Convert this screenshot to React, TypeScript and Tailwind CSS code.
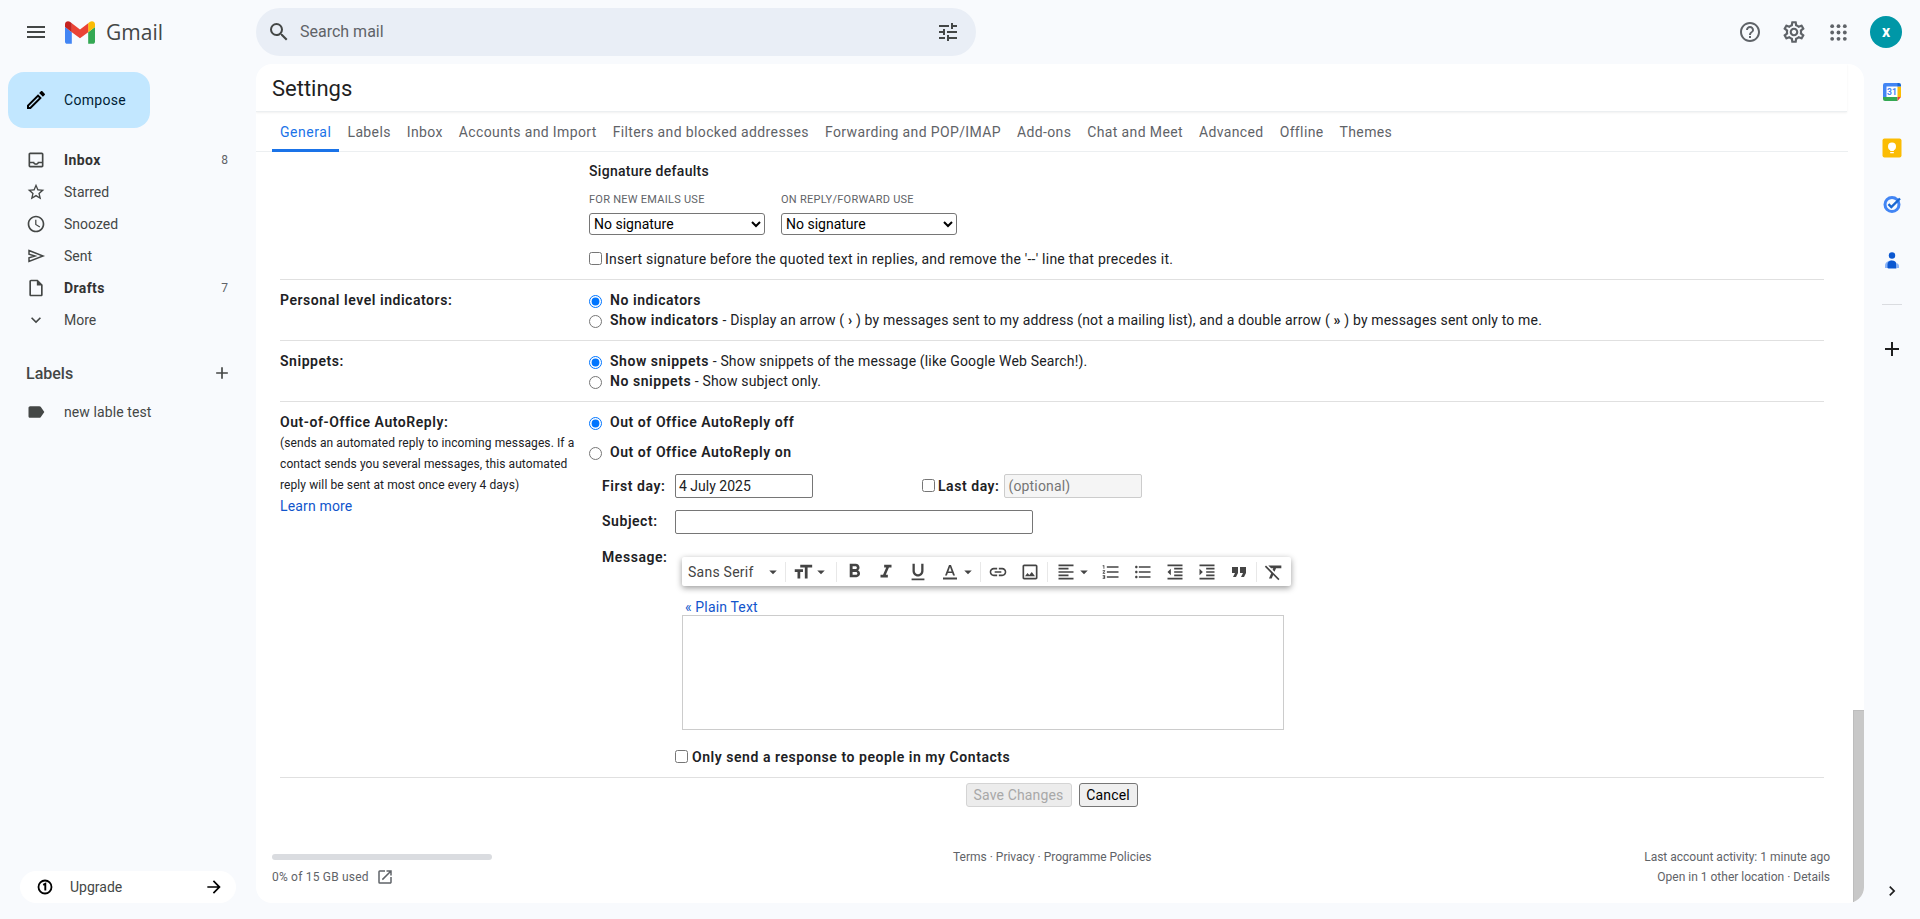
import {
  MdMenu, MdSearch, MdTune, MdHelpOutline, MdOutlineSettings, MdOutlineEdit, MdOutlineInbox, MdStarBorder,
  MdAccessTime, MdOutlineInsertDriveFile, MdExpandMore, MdAdd, MdLabel, MdArrowForward,
  MdOpenInNew, MdChevronRight, MdFormatSize, MdFormatBold, MdFormatItalic, MdFormatUnderlined, MdLink,
  MdOutlineImage, MdFormatAlignLeft, MdFormatListNumbered, MdFormatListBulleted, MdFormatIndentDecrease,
  MdFormatIndentIncrease, MdFormatQuote, MdFormatClear, MdArrowDropDown,
} from 'react-icons/md';

function SentIcon({ size, className }: { size: number; className?: string }) {
  return (
    <svg viewBox="0 0 20 20" width={size} height={size} className={className} fill="none" stroke="currentColor" strokeWidth="1.5" strokeLinejoin="miter">
      <path d="M3 4.500L17 10 3 15.500v-3.700L9 10 3 8.200z" />
    </svg>
  );
}

const navItems = [
  { icon: MdOutlineInbox, label: 'Inbox', count: '8', bold: true },
  { icon: MdStarBorder, label: 'Starred' },
  { icon: MdAccessTime, label: 'Snoozed' },
  { icon: SentIcon, label: 'Sent' },
  { icon: MdOutlineInsertDriveFile, label: 'Drafts', count: '7', bold: true },
  { icon: MdExpandMore, label: 'More' },
];

const tabs = ['General', 'Labels', 'Inbox', 'Accounts and Import', 'Filters and blocked addresses', 'Forwarding and POP/IMAP', 'Add-ons', 'Chat and Meet', 'Advanced', 'Offline', 'Themes'];

const strong = 'font-semibold tracking-[0.55px]';

function GmailLogo() {
  return (
    <svg viewBox="52 42 88 66" className="w-[30px] h-[23px]">
      <path fill="#4285f4" d="M58 108h14V74L52 59v43c0 3.32 2.69 6 6 6" />
      <path fill="#34a853" d="M120 108h14c3.32 0 6-2.69 6-6V59l-20 15" />
      <path fill="#fbbc04" d="M120 48v26l20-15v-8c0-7.42-8.47-11.65-14.4-7.2" />
      <path fill="#ea4335" d="M72 74V48l24 18 24-18v26L96 92" />
      <path fill="#c5221f" d="M52 51v8l20 15V48l-5.6-4.2c-5.94-4.45-14.4-.22-14.4 7.2" />
    </svg>
  );
}

function AppsIcon() {
  return (
    <svg viewBox="0 0 24 24" className="w-[19px] h-[19px]" fill="#5f6368">
      {[4, 12, 20].map((y) => [4, 12, 20].map((x) => <circle key={`${x}-${y}`} cx={x} cy={y} r="2.4" />))}
    </svg>
  );
}

function CalendarIcon() {
  return (
    <svg viewBox="0 0 20 20" className="w-5 h-5">
      <rect x="4" y="4" width="12" height="12" fill="#fff" />
      <path fill="#4285f4" d="M1 3a2 2 0 0 1 2-2h13v3.500H4.500V15H1z" />
      <path fill="#fbbc04" d="M15.500 4.500H19V15h-3.500z" />
      <path fill="#34a853" d="M1 15h14.500v4H3a2 2 0 0 1-2-2z" />
      <path fill="#1967d2" d="M15.500 1H17a2 2 0 0 1 2 2v1.500h-3.500z" />
      <path fill="#ea4335" d="M15.500 15H19l-3.500 4z" />
      <text x="10" y="13.300" textAnchor="middle" fontSize="8.500" fontWeight="700" fill="#4285f4" fontFamily="Roboto, sans-serif">31</text>
    </svg>
  );
}

function KeepIcon() {
  return (
    <svg viewBox="0 0 20 20" className="w-5 h-5">
      <rect x="0.5" y="0.5" width="19" height="19" rx="2" fill="#fbbc04" />
      <circle cx="10" cy="8.5" r="4" fill="#fff" />
      <path fill="#fff" d="M8.2 11h3.6v2H8.2zM8.2 14h3.6v1.3H8.2z" />
    </svg>
  );
}

function TasksIcon() {
  return (
    <svg viewBox="0 0 20 20" className="w-5 h-5">
      <circle cx="10" cy="10.5" r="7" fill="none" stroke="#4285f4" strokeWidth="3" />
      <path d="M6.5 10.2l2.8 2.8L18 4.5" fill="none" stroke="#1967d2" strokeWidth="2.4" />
    </svg>
  );
}

function ContactsIcon() {
  return (
    <svg viewBox="0 0 20 20" className="w-5 h-5">
      <circle cx="10" cy="5.5" r="3.2" fill="#0b57d0" />
      <path fill="#8ab4f8" d="M3 18v-2.5C3 12.5 6 10.500 10 10.500v7.500z" />
      <path fill="#0b57d0" d="M5.500 18v-3.500c0-2.400 2-4 4.500-4s4.500 1.600 4.500 4V18a1 1 0 0 1-1 .5h-7z" />
      <path fill="#8ab4f8" d="M14.500 13c1.500.6 2.500 1.600 2.500 3v2h-2.500z" />
    </svg>
  );
}

function UpgradeIcon() {
  return (
    <svg viewBox="0 0 16 16" className="w-4 h-4" fill="none" stroke="#000">
      <circle cx="8" cy="8" r="6.500" strokeWidth="1.800" />
      <path d="M6.200 5.800L8.300 4.700V11.500" strokeWidth="1.900" />
    </svg>
  );
}

function TextColorIcon() {
  return (
    <svg viewBox="0 0 20 20" className="w-5 h-5" fill="#444">
      <path d="M9 3h2l4 10.500h-1.900l-.9-2.500H7.800l-.9 2.500H5zm-.6 6.500h3.200L10 5z" />
      <rect x="3" y="15.500" width="14" height="2" />
    </svg>
  );
}

function ToolButton({ children }: { children: React.ReactNode }) {
  return <div className="w-8 h-full flex items-center justify-center text-[#444]">{children}</div>;
}

function ToolSep() {
  return <div className="w-px h-5 bg-[#e8e8e8] mx-[1px]" />;
}

function Toolbar() {
  return (
    <div className="w-[609px] h-[29px] flex items-center bg-white rounded-[2px] shadow-[0_2px_6px_rgba(0,0,0,0.4)]">
      <div className="w-[102px] pl-[6px] flex items-center text-[14px] tracking-[0.25px] text-[#444]">
        <span>Sans Serif</span>
        <MdArrowDropDown size={18} className="ml-[10px]" />
      </div>
      <ToolSep />
      <div className="w-[48px] flex items-center justify-center text-[#444]">
        <MdFormatSize size={22} />
        <MdArrowDropDown size={18} className="-ml-[2px]" />
      </div>
      <ToolSep />
      <ToolButton><MdFormatBold size={23} /></ToolButton>
      <ToolButton><MdFormatItalic size={22} /></ToolButton>
      <ToolButton><MdFormatUnderlined size={22} /></ToolButton>
      <div className="w-[45px] flex items-center pl-[6px] text-[#444]">
        <TextColorIcon />
        <MdArrowDropDown size={18} className="-ml-[1px]" />
      </div>
      <ToolSep />
      <ToolButton><MdLink size={20} /></ToolButton>
      <ToolButton><MdOutlineImage size={20} /></ToolButton>
      <ToolSep />
      <div className="w-[46px] flex items-center pl-[7px] text-[#444]">
        <MdFormatAlignLeft size={20} />
        <MdArrowDropDown size={18} className="-ml-[1px]" />
      </div>
      <ToolButton><MdFormatListNumbered size={20} /></ToolButton>
      <ToolButton><MdFormatListBulleted size={20} /></ToolButton>
      <ToolButton><MdFormatIndentDecrease size={20} /></ToolButton>
      <ToolButton><MdFormatIndentIncrease size={20} /></ToolButton>
      <ToolButton><MdFormatQuote size={24} /></ToolButton>
      <ToolSep />
      <ToolButton><MdFormatClear size={22} /></ToolButton>
    </div>
  );
}

function Sidebar() {
  return (
    <aside className="w-64 shrink-0 flex flex-col pt-2">
      <button className="ml-2 w-[142px] h-14 rounded-2xl bg-[#c2e7ff] flex items-center text-[#001d35]">
        <MdOutlineEdit size={24} className="ml-[16px] text-black" />
        <span className="ml-[16px] text-sm tracking-[0.3px]">Compose</span>
      </button>
      <nav className="mt-4">
        {navItems.map((item) => {
          const Icon = item.icon;
          return (
            <div key={item.label} className="h-8 flex items-center pl-[26px] pr-7 text-sm text-[#444746]">
              <Icon size={20} className="shrink-0" />
              <span className={item.bold ? 'ml-[18px] font-bold tracking-[0.4px] text-[#333]' : 'ml-[18px]'}>{item.label}</span>
              {item.count && <span className="ml-auto text-xs text-[#5f6368]">{item.count}</span>}
            </div>
          );
        })}
      </nav>
      <div className="mt-[21px] h-[34px] flex items-center justify-between pl-[26px] pr-6 text-[16px] text-[#444746]">
        <span className="font-medium">Labels</span>
        <MdAdd size={20} className="-mt-[2px]" />
      </div>
      <div className="mt-[5px] h-8 flex items-center pl-[26px] text-sm text-[#444746]">
        <MdLabel size={20} className="shrink-0" />
        <span className="ml-[18px] tracking-[0.1px]">new lable test</span>
      </div>
      <div className="mt-auto mb-4 mx-5 h-8 rounded-full bg-white flex items-center pl-[17px] pr-3 text-sm text-[#444746]">
        <UpgradeIcon />
        <span className="ml-[17px]">Upgrade</span>
        <MdArrowForward size={20} className="ml-auto text-black" />
      </div>
    </aside>
  );
}

function Rail() {
  return (
    <aside className="w-14 shrink-0 flex flex-col items-center">
      <div className="h-14 flex items-center justify-center"><CalendarIcon /></div>
      <div className="h-14 flex items-center justify-center"><KeepIcon /></div>
      <div className="h-14 flex items-center justify-center"><TasksIcon /></div>
      <div className="h-14 flex items-center justify-center"><ContactsIcon /></div>
      <div className="mt-4 w-5 h-px bg-[#dadce0]" />
      <div className="mt-4 h-14 flex items-center justify-center"><MdAdd size={24} className="text-[#1f1f1f]" /></div>
      <div className="mt-auto mb-[16px] h-6 flex items-center justify-center"><MdChevronRight size={20} className="text-[#1f1f1f]" /></div>
    </aside>
  );
}

function Settings() {
  return (
    <main className="flex-1 mb-4 bg-white rounded-2xl relative overflow-hidden flex flex-col text-sm tracking-[0.16px] text-[#202124]">
      <div className="h-12 mr-[17px] pl-4 pt-[2px] flex items-center border-b border-[#eceff1] shadow-[0_1px_2px_rgba(0,0,0,0.06)]">
        <h1 className="text-[22px] font-normal tracking-normal text-[#1f1f1f]">Settings</h1>
      </div>
      <div className="h-10 mr-4 pl-4 flex border-b border-[#eceff1] text-[#5f6368] tracking-[0.37px]">
        {tabs.map((tab, i) => (
          <div key={tab} className={i === 0 ? 'px-2 h-10 leading-[41px] border-b-[3px] border-[#1a73e8] text-[#1a73e8] tracking-[0.55px]' : 'px-2 h-10 leading-[41px]'}>
            {tab}
          </div>
        ))}
      </div>

      <div className="ml-6 w-[1544px]">
        <div className="h-[128px] border-b border-[#e0e0e0] pl-[309px] pt-[9px]">
          <div className="font-medium tracking-[0.3px] h-[20px] leading-[20px]">Signature defaults</div>
          <div className="flex gap-4 mt-[12px]">
            <div className="w-[176px]">
              <div className="text-[11px] leading-[14px] tracking-[0.26px] text-[#5f6368] mb-[6px] whitespace-nowrap">FOR NEW EMAILS USE</div>
              <select className="w-[176px] h-[22px] border border-[#767676] rounded-[3px] bg-white text-[14px] tracking-normal text-black">
                <option>No signature</option>
              </select>
            </div>
            <div className="w-[176px]">
              <div className="text-[11px] leading-[14px] tracking-[0.26px] text-[#5f6368] mb-[6px] whitespace-nowrap">ON REPLY/FORWARD USE</div>
              <select className="w-[176px] h-[22px] border border-[#767676] rounded-[3px] bg-white text-[14px] tracking-normal text-black">
                <option>No signature</option>
              </select>
            </div>
          </div>
          <label className="flex items-center mt-[14px] h-5">
            <input type="checkbox" className="w-[13px] h-[13px] mb-[2px]" />
            <span className="ml-[3px] tracking-[0.24px]">Insert signature before the quoted text in replies, and remove the '--' line that precedes it.</span>
          </label>
        </div>

        <div className="h-[61px] border-b border-[#e0e0e0] grid grid-cols-[309px_1fr] pt-[10px]">
          <div className={`${strong} leading-5`}>Personal level indicators:</div>
          <div>
            <label className="flex items-center h-5">
              <input type="radio" name="ind" defaultChecked className="w-[13px] h-[13px] mt-[2px]" />
              <span className={`ml-2 ${strong}`}>No indicators</span>
            </label>
            <label className="flex items-center h-5">
              <input type="radio" name="ind" className="w-[13px] h-[13px] mt-[2px]" />
              <span className="ml-2"><b className={strong}>Show indicators</b> - Display an arrow ( <b>›</b> ) by messages sent to my address (not a mailing list), and a double arrow ( <b>»</b> ) by messages sent only to me.</span>
            </label>
          </div>
        </div>

        <div className="h-[61px] border-b border-[#e0e0e0] grid grid-cols-[309px_1fr] pt-[10px]">
          <div className={`${strong} leading-5`}>Snippets:</div>
          <div>
            <label className="flex items-center h-5">
              <input type="radio" name="snip" defaultChecked className="w-[13px] h-[13px] mt-[2px]" />
              <span className="ml-2"><b className={strong}>Show snippets</b> - Show snippets of the message (like Google Web Search!).</span>
            </label>
            <label className="flex items-center h-5">
              <input type="radio" name="snip" className="w-[13px] h-[13px] mt-[2px]" />
              <span className="ml-2"><b className={strong}>No snippets</b> - Show subject only.</span>
            </label>
          </div>
        </div>

        <div className="h-[376px] border-b border-[#e0e0e0] grid grid-cols-[309px_1fr] pt-[10px]">
          <div className="pr-[12px]">
            <div className={`${strong} leading-5`}>Out-of-Office AutoReply:</div>
            <p className="mt-px text-xs leading-[21px] tracking-[0.1px]">(sends an automated reply to incoming messages. If a contact sends you several messages, this automated reply will be sent at most once every 4 days)</p>
            <a className="block text-[#1155cc] leading-5">Learn more</a>
          </div>
          <div>
            <label className="flex items-center h-5">
              <input type="radio" name="ooo" defaultChecked className="w-[13px] h-[13px] mt-[2px]" />
              <span className={`ml-2 ${strong}`}>Out of Office AutoReply off</span>
            </label>
            <label className="flex items-center h-5 mt-[10px]">
              <input type="radio" name="ooo" className="w-[13px] h-[13px] mt-[2px]" />
              <span className={`ml-2 ${strong}`}>Out of Office AutoReply on</span>
            </label>
            <div className="ml-[13px] mt-[12px] grid grid-cols-[73px_1fr] items-center gap-y-3">
              <div className={strong}>First day:</div>
              <div className="flex items-center">
                <div className="w-[138px] h-6 border border-[#767676] rounded-[2px] px-[3px] leading-[22px] tracking-normal">4 July 2025</div>
                <input type="checkbox" className="ml-[109px] w-[13px] h-[13px] mb-[2px]" />
                <span className={`ml-[3px] ${strong}`}>Last day:</span>
                <div className="ml-[5px] w-[138px] h-6 border border-[#ccc] bg-[#f5f5f5] rounded-[2px] px-[3px] leading-[22px] text-[#757575]">(optional)</div>
              </div>
              <div className={`${strong} -mt-[2px]`}>Subject:</div>
              <div className="w-[358px] h-6 border border-[#767676] rounded-[2px]" />
            </div>
            <div className="ml-[13px] mt-[23px] grid grid-cols-[80px_1fr]">
              <div className={`${strong} leading-[15px] -mt-[7px]`}>Message:</div>
              <div>
                <Toolbar />
                <a className="block mt-[13px] pl-[3px] h-[15px] leading-[17px] text-[#1155cc]">« Plain Text</a>
                <div className="mt-[1px] w-[602px] h-[115px] border border-[#ccc]" />
              </div>
            </div>
            <label className="flex items-center ml-[86px] mt-[17px] h-5">
              <input type="checkbox" className="w-[13px] h-[13px] mb-[2px]" />
              <span className={`ml-[4px] ${strong}`}>Only send a response to people in my Contacts</span>
            </label>
          </div>
        </div>

        <div className="flex justify-center gap-[7px] pt-[5px] pr-[1px]">
          <button disabled className="w-[106px] h-6 border border-[#d4d4d4] bg-[#ececec] rounded-[3px] text-[#a8a8a8]">Save Changes</button>
          <button className="w-[59px] h-6 border border-[#767676] bg-[#efefef] rounded-[3px] text-black">Cancel</button>
        </div>
      </div>

      <div className="mt-auto mb-[16px] pl-4 pr-[34px] flex items-end text-xs tracking-normal text-[#5f6368]">
        <div className="w-[220px]">
          <div className="h-[6px] rounded-full bg-[#dadce0]" />
          <div className="mt-[7px] flex items-center h-5 tracking-[0.2px]">
            <span>0% of 15 GB used</span>
            <MdOpenInNew size={18} className="ml-[7px] text-[#5f6368]" />
          </div>
        </div>
        <div className="h-5 leading-5 mb-5 ml-[461px]">Terms · Privacy · Programme Policies</div>
        <div className="ml-auto text-right leading-5">
          <div>Last account activity: 1 minute ago</div>
          <div>Open in 1 other location · Details</div>
        </div>
      </div>

      <div className="absolute right-0 bottom-0 w-[11px] h-[193px] bg-[#c8c8c8] border-t border-l border-[#bdbdbd]" />
    </main>
  );
}

export default function App() {
  return (
    <div className="h-screen overflow-hidden flex flex-col bg-[#f8fafd] font-['Roboto',sans-serif]">
      <header className="h-16 shrink-0 flex items-center">
        <div className="w-64 shrink-0 flex items-center">
          <div className="w-[72px] pl-[26px]"><MdMenu size={24} className="text-[#444746] -ml-[2px]" /></div>
          <div className="-ml-[7px]"><GmailLogo /></div>
          <span className="ml-[11px] mt-[2px] text-[21px] text-[#444746] font-['Open_Sans',sans-serif]">Gmail</span>
        </div>
        <div className="w-[720px] h-12 rounded-3xl bg-[#e9eef6] flex items-center pl-[11px] pr-[16px] text-[#444746]">
          <MdSearch size={24} />
          <span className="ml-[9px] text-[16px] text-[#5f6368]">Search mail</span>
          <MdTune size={24} className="ml-auto" />
        </div>
        <div className="ml-auto flex items-center pr-[18px] text-[#5f6368]">
          <div className="w-11 flex justify-center"><MdHelpOutline size={24} /></div>
          <div className="w-11 flex justify-center"><MdOutlineSettings size={26} /></div>
          <div className="w-11 flex justify-center"><AppsIcon /></div>
          <div className="ml-[10px] w-8 h-8 rounded-full bg-[#0097a7] text-white text-base font-bold flex items-center justify-center">x</div>
        </div>
      </header>
      <div className="flex-1 flex min-h-0">
        <Sidebar />
        <Settings />
        <Rail />
      </div>
    </div>
  );
}
